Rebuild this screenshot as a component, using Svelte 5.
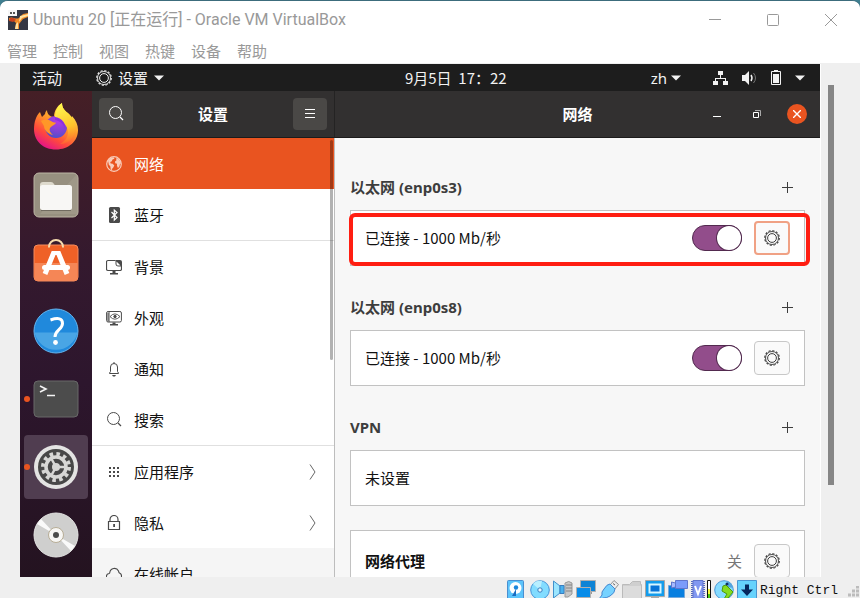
<script lang="ts">
  type Item = { id: string; label: string; icon: string; line?: boolean; more?: boolean };

  const menus = ['管理', '控制', '视图', '热键', '设备', '帮助'];

  const items: Item[] = [
    { id: 'network', label: '网络', icon: 'globe' },
    { id: 'bluetooth', label: '蓝牙', icon: 'bluetooth', line: true },
    { id: 'background', label: '背景', icon: 'background' },
    { id: 'appearance', label: '外观', icon: 'appearance' },
    { id: 'notifications', label: '通知', icon: 'bell' },
    { id: 'search', label: '搜索', icon: 'search', line: true },
    { id: 'apps', label: '应用程序', icon: 'grid', more: true },
    { id: 'privacy', label: '隐私', icon: 'lock', more: true },
    { id: 'accounts', label: '在线帐户', icon: 'cloud' },
  ];

  const dock = [
    { id: 'firefox', name: 'Firefox' },
    { id: 'files', name: '文件' },
    { id: 'software', name: 'Ubuntu Software' },
    { id: 'help', name: '帮助' },
    { id: 'terminal', name: '终端', running: true },
    { id: 'settings', name: '设置', running: true },
    { id: 'disc', name: '光盘' },
  ];

  const devices = ['disk', 'optical', 'audio', 'network', 'usb', 'folder', 'display', 'recording', 'cpu', 'mouse', 'keyboard'];

  let current = $state('network');
  let adapters = $state([
    { name: 'enp0s3', on: true, marked: true },
    { name: 'enp0s8', on: true, marked: false },
  ]);
</script>

{#snippet gear()}
  <svg width="16" height="16" viewBox="0 0 16 16" fill="none" stroke="currentColor" aria-hidden="true">
    <circle cx="8" cy="8" r="7.3" stroke-width="1.1" stroke-dasharray="2.2 1.622" />
    <circle cx="8" cy="8" r="6.5" stroke-width=".9" />
    <circle cx="8" cy="8" r="4.4" stroke-width="1" />
  </svg>
{/snippet}

{#snippet caret()}
  <svg width="10" height="6" viewBox="0 0 10 6" aria-hidden="true"><path d="M0 .5h10L5 5.5z" fill="currentColor" /></svg>
{/snippet}

{#snippet plus()}
  <svg width="11" height="11" viewBox="0 0 11 11" aria-hidden="true"><path d="M5.5 0v11M0 5.5h11" stroke="currentColor" /></svg>
{/snippet}

{#snippet panelIcon(name: string)}
  <svg class="icon" width="16" height="16" viewBox="0 0 16 16" fill="none" stroke="currentColor" aria-hidden="true">
    {#if name === 'globe'}
      <circle cx="8" cy="8" r="7.3" stroke-width="1.2" />
      <path d="M2 4.5 4.5 2l3-.7 1 1.4-2 .9-.7 1.6-1.6.8.5 1.4 2 .4 1.6 1.6-1 2.1-1 .9-.4 2-1.2-1.4-.4-2.8-1.5-1.4zM10 2.2l2 .3 2.5 3 .4 2-.9.5-.7 2.8-1.4 1.2-1-2.4.2-1.8-1.9-.6L9 5.4l1.5-1.1z" fill="currentColor" stroke="none" />
    {:else if name === 'bluetooth'}
      <rect x="3" width="11" height="16" rx="1.5" fill="currentColor" stroke="none" />
      <path d="m5.5 5 5.5 5.5-2.7 2.6V3L11 5.5 5.5 11" stroke="#fff" stroke-width="1.2" />
    {:else if name === 'background'}
      <path d="M9.5 1.5H2A1.5 1.5 0 0 0 .5 3v7A1.5 1.5 0 0 0 2 11.5h12a1.5 1.5 0 0 0 1.5-1.5V7" stroke-width="1.2" />
      <path d="M9.5 1H14a2 2 0 0 1 2 2v4.500h-3.500a3 3 0 0 1-3-3z" fill="currentColor" stroke="none" />
      <path d="m10.500 2.500 4 4H12a1.500 1.500 0 0 1-1.500-1.500z" fill="#fff" stroke="none" />
      <path d="M6.500 12h3v2H12v1.500H4V14h2.500z" fill="currentColor" stroke="none" />
    {:else if name === 'appearance'}
      <rect x=".6" y="1.500" width="14.800" height="10.500" rx="1.500" />
      <path d="M3 2v10M1 4h2M1 6h2M1 8h2M1 10h2" />
      <path d="M4 6.600q4.800-5.400 10 0-5.200 5.200-10 0z" stroke-width=".9" />
      <circle cx="9" cy="6.500" r="1.200" fill="currentColor" />
      <path d="M6.500 12.500h3V14H12v1.500H4V14h2.500z" fill="currentColor" stroke="none" />
    {:else if name === 'bell'}
      <path d="M3.500 12.500V12l1-1.500V6a3.500 3.500 0 0 1 7 0v4.500l1 1.500v.5zM8 1v1.500" />
      <path d="M6 14h4l-1 1.500H7z" fill="currentColor" stroke="none" />
    {:else if name === 'search'}
      <circle cx="7.500" cy="6.500" r="6" />
      <path d="m12 11 3 3" stroke-width="1.300" />
    {:else if name === 'grid'}
      <path d="M3 4h10M3 8h10M3 12h10" stroke-width="2" stroke-dasharray="2 2" />
    {:else if name === 'lock'}
      <path d="M2.500 6.500h11v8h-11zM4 6.500V4.500a4 4 0 0 1 8 0v2" stroke-width="1.200" />
      <path d="M7.200 9h1.800v3H7.200z" fill="currentColor" stroke="none" />
    {:else if name === 'cloud'}
      <path d="M4 13.500a3 3 0 0 1-1-6 1 1 0 0 0 .8-1A4.600 4.600 0 0 1 12.500 5c.4.900.1 1.600 1 2a3.400 3.400 0 0 1-1.500 6.500z" stroke-width="1.100" />
    {/if}
  </svg>
{/snippet}

{#snippet dockIcon(name: string)}
  <svg width="48" height="48" viewBox="0 0 48 48" aria-hidden="true">
    {#if name === 'firefox'}
      <defs>
        <linearGradient id="fx-body" x1=".8" y1=".1" x2=".3" y2="1">
          <stop offset="0" stop-color="#fff04a" />
          <stop offset=".4" stop-color="#ff9a2a" />
          <stop offset=".72" stop-color="#ff4a3c" />
          <stop offset="1" stop-color="#e3128a" />
        </linearGradient>
        <radialGradient id="fx-globe" cx=".6" cy=".2" r=".9">
          <stop offset="0" stop-color="#b737e8" />
          <stop offset=".6" stop-color="#7b45d2" />
          <stop offset="1" stop-color="#4352c8" />
        </radialGradient>
        <linearGradient id="fx-tail" x1=".5" y1="0" x2=".7" y2="1">
          <stop offset="0" stop-color="#fff64e" />
          <stop offset=".6" stop-color="#ffc32b" />
          <stop offset="1" stop-color="#ff8126" stop-opacity=".2" />
        </linearGradient>
      </defs>
      <path d="M8 9q1 3 2 5l3-3q0-2 2-4c0 4 3 7 7 7 0-6 3-11 8-14 0 5 3 8 7 11l3 5 0-3c4 4 6 9 6 14C46 38 37 46.500 24 46.500S2 38 2 26C2 19 4 13 8 9z" fill="url(#fx-body)" />
      <circle cx="24" cy="24" r="11" fill="url(#fx-globe)" />
      <path d="M30 0c0 5 3 8 7 11 7 6 8 17 3 24-3 4-7 6-12 6 8-4 10-12 6-18-2-4-8-6-11-9 0-6 3-11 7-14z" fill="url(#fx-tail)" />
      <path d="M9 18c4-2 8-1 10 0 2 2 5 1 5 2-1 2-5 3-6 5-1 2 0 5 3 7-5-1-9-5-9-9-1-2-2-3-3-5z" fill="#ff9728" />
      <path d="M23 14c7 1 11 6 10 12-1-5-5-8-10-9z" fill="#8e2fe0" />
    {:else if name === 'files'}
      <rect x="2" y="2" width="44" height="44" rx="5" fill="#979080" stroke="#bcb5a4" />
      <path d="M45 3v40H8z" fill="#a8a090" opacity=".5" />
      <path d="M8 14a3 3 0 0 1 3-3h8q2 0 3 2l2 3H8z" fill="#dedacd" />
      <rect x="8" y="14" width="32" height="25" rx="2.500" fill="#f8f7f5" />
      <path d="M9 39.500h30" stroke="#716b60" />
    {:else if name === 'software'}
      <rect x="2" y="6" width="44" height="36" rx="4" fill="#ef6127" stroke="#f58b5c" />
      <path d="M2.500 24h43v14a4 4 0 0 1-4 4h-35a4 4 0 0 1-4-4z" fill="#f58656" />
      <path d="M17 8.500V8a7 7 0 0 1 14 0v.5" fill="none" stroke="#f6dcae" stroke-width="2" />
      <path d="m22 13-9 22M26 13l9 22" stroke="#fff" stroke-width="5" />
      <rect x="20" y="12" width="8" height="4" fill="#fff" />
      <rect x="10" y="26" width="28" height="5" rx="2.500" fill="#fff" />
    {:else if name === 'help'}
      <circle cx="24" cy="24" r="22" fill="#2089dc" stroke="#63b5ef" />
      <path d="M2.500 25.500h43A22 22 0 0 1 2.500 25.500z" fill="#49a5e5" />
      <path d="M18.500 13q12-4 12 3.500c0 6-7.500 6.500-7.500 13.500" fill="none" stroke="#fff" stroke-width="3" />
      <circle cx="23.500" cy="35.500" r="2.400" fill="#fff" />
    {:else if name === 'terminal'}
      <rect x="2" y="6" width="44" height="36" rx="4" fill="#4c4c4c" stroke="#686868" />
      <path d="m8 11 6 3-6 3M15 20.500h8" fill="none" stroke="#f4f4f4" stroke-width="1.600" />
    {:else if name === 'settings'}
      <circle cx="24" cy="24" r="22" fill="#e4e4e3" />
      <circle cx="24" cy="24" r="18" fill="#484848" />
      <circle cx="24" cy="24" r="13" fill="none" stroke="#d7d7d5" stroke-width="4" stroke-dasharray="3.500 3.307" />
      <circle cx="24" cy="24" r="10" fill="none" stroke="#d7d7d5" stroke-width="3.500" />
      <circle cx="24" cy="24" r="4" fill="#d7d7d5" />
      <path d="M24 24h10M24 24l-5-9M24 24l-5 9" stroke="#d7d7d5" stroke-width="2.500" />
    {:else}
      <circle cx="24" cy="24" r="22" fill="#cfcfce" stroke="#e4e4e3" />
      <path d="M24 24 5 13 9 8zM24 24l19 11-4 5z" fill="#fafafa" />
      <circle cx="24" cy="24" r="7.500" fill="#f7f6f4" stroke="#b7ad96" />
      <circle cx="24" cy="24" r="3" fill="#4b4b4b" />
    {/if}
  </svg>
{/snippet}

{#snippet deviceIcon(name: string)}
  <svg width="20" height="20" viewBox="0 0 20 20" aria-hidden="true">
    {#if name === 'disk'}
      <rect x=".5" y=".5" width="16" height="19" rx="1" fill="#5cc4fb" stroke="#4b8fd0" />
      <circle cx="8.500" cy="8" r="6" fill="#fff" />
      <circle cx="9" cy="7.500" r="2.200" fill="#1c86dc" />
      <path d="m9 9-4 7h4z" fill="#1a6dc2" />
    {:else if name === 'optical'}
      <circle cx="10" cy="10" r="9.300" fill="#82dcff" stroke="#4694d8" />
      <path d="M10 10 3 4a9 9 0 0 1 9-3z" fill="#b8efff" />
      <circle cx="10" cy="10" r="2.200" fill="#e8faff" stroke="#397ec0" />
    {:else if name === 'audio'}
      <path d="M12 3q4-3 7 0v11l-4 3h-3z" fill="#c7c7c7" stroke="#999" />
      <path d="M13 5h6M13 8h6M13 11h6" stroke="#858585" />
      <path d="M.5 1 7 6v7L.5 18z" fill="#9be6ff" stroke="#4291cc" />
      <path d="M7 5.500h4v8H7z" fill="#47b1ef" stroke="#397ec0" />
    {:else if name === 'network'}
      <path d="M4.500.500h15v11h-15z" fill="#0d83d5" stroke="#b0b0b0" />
      <path d="M10 12h6v2h-6z" fill="#999" />
      <path d="M.5 7.500h14v10H.5z" fill="#088ce9" stroke="#b0b0b0" />
      <path d="M4 18h8v2H4z" fill="#888" />
    {:else if name === 'usb'}
      <path d="m11 5 4-4.500 4.500 4-4 5z" fill="#ececec" stroke="#929292" />
      <path d="M5 9q3-5 6-5l5 5q0 4-5 7-3 2-7 2l-3 2-1-1 3-4q-1-3 2-6z" fill="#76d2ff" stroke="#4688d0" />
      <path d="M14 3.500 16 5" stroke="#666" />
    {:else if name === 'folder'}
      <path d="M.5 4.500h7l3-3h8v3h1V20H.5z" fill="#cfcfcf" stroke="#bbb" />
      <path d="M1 6h18v13H1z" fill="#dcdcdc" />
    {:else if name === 'display'}
      <path d="M.5.500h19v16H.5z" fill="#139cec" stroke="#a8a8a8" />
      <path d="M4.500 4.500h11v8h-11z" fill="#0873d6" stroke="#d8f6ff" stroke-width="2" />
      <path d="M6 17h8v3H6z" fill="#aaa" />
    {:else if name === 'recording'}
      <path d="M.5 5.500h16v12H.5z" fill="#087fe0" stroke="#76a9da" />
      <path d="M7.500.500h12v8h-12z" fill="#7b9bfa" stroke="#6075cc" />
      <path d="m3.500 2 4 1v4l-4 1z" fill="#a5b9ff" stroke="#6075cc" />
      <path d="M4 18h9v2H4z" fill="#aaa" />
    {:else if name === 'cpu'}
      <path d="M1 1v19M13 1v19" stroke="#5669bd" stroke-width="2" stroke-dasharray="1 1" />
      <path d="M2 .5h10V20H2z" fill="#8197f0" stroke="#6075cc" />
      <path d="m4 6 3 8 3-8" fill="none" stroke="#fff" stroke-width="2" />
      <path d="M16.500.500h3V20h-3z" fill="#fafa40" stroke="#111" />
      <path d="M17 1h2v8h-2z" fill="#fff" />
      <path d="M17 14h2v6h-2z" fill="#4acb16" />
    {:else if name === 'mouse'}
      <circle cx="10" cy="10" r="9.300" fill="#85dbff" stroke="#4a98d8" />
      <path d="M13 1q5 1 6 7l-5-1z" fill="#54a4de" />
      <path d="m9 6 3-1 7 7-5 6-4 1 3-5-5-3z" fill="#83dd20" stroke="#4e9a0d" />
      <circle cx="13" cy="4" r="1.500" fill="#0d3166" />
    {:else}
      <path d="M.5.500h19V20H.5z" fill="#66d2fc" stroke="#4b96d2" />
      <path d="M8 4.500h4v5h4L10 16 4 9.500h4z" fill="#06275d" />
    {/if}
  </svg>
{/snippet}

<div class="window">
  <header class="titlebar">
    <svg class="logo" width="20" height="20" viewBox="0 0 20 20" aria-hidden="true">
      <rect width="20" height="20" fill="#343642" />
      <path d="M1 8c4-2 6 2 10 0l4-4 5-1v4l-5 2-4 5v5H7l1-6-3-3-4 1z" fill="#f28c28" />
      <path d="m12 6 8-2v2l-6 2-3 4zM8 14l2-2v7H7z" fill="#ffe2a0" />
      <path d="M2 8q4-1 6 2l-3 2-4-1z" fill="#c8421e" />
      <path d="M0 0h9v6H0z" fill="#f6f6f6" />
      <path d="M2 2h2v2H2zM5 2h2v2H5z" fill="#555" />
    </svg>
    <h1>Ubuntu 20 [正在运行] - Oracle VM VirtualBox</h1>
    <div class="controls">
      <button aria-label="最小化">
        <svg width="12" height="12" viewBox="0 0 12 12"><path d="M0 5.500h12" stroke="currentColor" /></svg>
      </button>
      <button aria-label="最大化">
        <svg width="12" height="12" viewBox="0 0 12 12"><rect x=".5" y=".5" width="11" height="11" rx="1" fill="none" stroke="currentColor" /></svg>
      </button>
      <button aria-label="关闭">
        <svg width="12" height="12" viewBox="0 0 12 12"><path d="m0 0 12 12M12 0 0 12" stroke="currentColor" /></svg>
      </button>
    </div>
  </header>

  <nav class="menubar">
    {#each menus as m (m)}
      <button>{m}</button>
    {/each}
  </nav>

  <div class="viewport">
    <div class="guest">
      <div class="topbar">
        <div class="left">
          <button>活动</button>
          <button class="app">{@render gear()}<span>设置</span>{@render caret()}</button>
        </div>
        <time>9月5日&nbsp; 17：22</time>
        <div class="right">
          <button class="lang">zh {@render caret()}</button>
          <button class="tray" aria-label="系统菜单">
            <svg width="15" height="14" viewBox="0 0 15 14"><path d="M5 0h5v4H8v3h5v3h2v4h-5v-4h2V8H3v2h2v4H0v-4h2V7h5V4H5z" fill="currentColor" /></svg>
            <svg width="15" height="14" viewBox="0 0 15 14"><path d="M0 4h3l4-4v14L3 10H0z" fill="currentColor" /><path d="M9 4q2 3 0 6" fill="none" stroke="currentColor" stroke-width="1.500" /><path d="M11.500 2q4 5 0 10" fill="none" stroke="#777" /></svg>
            <svg width="10" height="15" viewBox="0 0 10 15"><path d="M.5 1.500h9v13h-9z" fill="none" stroke="currentColor" /><path d="M3 0h4v2H3zM2 4h6v9H2z" fill="currentColor" /></svg>
            {@render caret()}
          </button>
        </div>
      </div>

      <div class="desktop">
        <nav class="dock" aria-label="Dock">
          {#each dock as d (d.id)}
            <button class:focused={d.id === 'settings'} class:running={d.running} aria-label={d.name}>
              {@render dockIcon(d.id)}
            </button>
          {/each}
        </nav>

        <aside class="sidebar">
          <div class="headerbar">
            <button class="tool" aria-label="搜索">{@render panelIcon('search')}</button>
            <h2>设置</h2>
            <button class="tool" aria-label="菜单">
              <svg width="10" height="10" viewBox="0 0 10 10"><path d="M0 .5h10M0 4.500h10M0 8.500h10" stroke="currentColor" /></svg>
            </button>
          </div>
          <div class="list">
            <ul>
              {#each items as item (item.id)}
                <li class:line={item.line}>
                  <button
                    class:selected={current === item.id}
                    class:hovered={item.id === 'accounts'}
                    onclick={() => (current = item.id)}
                  >
                    {@render panelIcon(item.icon)}
                    <span>{item.label}</span>
                    {#if item.more}
                      <svg width="7" height="16" viewBox="0 0 7 16" aria-hidden="true"><path d="m1 .5 5 7.500-5 7.500" fill="none" stroke="#666" /></svg>
                    {/if}
                  </button>
                </li>
              {/each}
            </ul>
            <div class="scroll"></div>
          </div>
        </aside>

        <main>
          <div class="headerbar">
            <span></span>
            <h2>网络</h2>
            <div class="wm">
              <button aria-label="最小化"><svg width="8" height="10" viewBox="0 0 8 10"><path d="M0 7.500h8" stroke="currentColor" /></svg></button>
              <button aria-label="还原"><svg width="8" height="8" viewBox="0 0 8 8" fill="none"><path d="M2 .5h5.500V6" stroke="#aaa" /><path d="M.5 2.500h5v5h-5z" stroke="currentColor" /></svg></button>
              <button class="close" aria-label="关闭"><svg width="8" height="8" viewBox="0 0 8 8"><path d="m0 0 8 8M8 0 0 8" stroke="currentColor" stroke-width="1.400" /></svg></button>
            </div>
          </div>

          <div class="content">
            {#each adapters as a (a.name)}
              <section>
                <div class="head">
                  <h3>以太网 ({a.name})</h3>
                  <button aria-label="添加">{@render plus()}</button>
                </div>
                <div class="card">
                  <label for={a.name}>已连接 - 1000 Mb/秒</label>
                  <input id={a.name} type="checkbox" role="switch" bind:checked={a.on} />
                  <button class="options" class:active={a.marked} aria-label="选项">{@render gear()}</button>
                  {#if a.marked}<div class="mark"></div>{/if}
                </div>
              </section>
            {/each}
            <section>
              <div class="head">
                <h3>VPN</h3>
                <button aria-label="添加">{@render plus()}</button>
              </div>
              <div class="card"><p>未设置</p></div>
            </section>
            <section>
              <div class="card proxy">
                <h4>网络代理</h4>
                <span class="state">关</span>
                <button class="options" aria-label="代理选项">{@render gear()}</button>
              </div>
            </section>
          </div>
        </main>
      </div>
    </div>
    <div class="gutter"><div class="thumb"></div></div>
  </div>

  <footer class="statusbar">
    <div class="devices">
      {#each devices as d (d)}
        {@render deviceIcon(d)}
      {/each}
    </div>
    <span class="hostkey">Right Ctrl</span>
    <svg class="grip" width="12" height="12" viewBox="0 0 12 12" aria-hidden="true">
      <path d="M8 1h3M4 5h3M8 5h3M0 9h3M4 9h3M8 9h3" stroke="#bcbcbc" stroke-width="3" />
    </svg>
  </footer>
</div>

<style>
  :global(body) {
    margin: 0;
    background: #3f7f90;
  }
  .window {
    height: 100vh;
    box-sizing: border-box;
    display: flex;
    flex-direction: column;
    overflow: hidden;
    border-top: 1px solid #3c6c7c;
    border-radius: 8px 8px 0 0;
    background: #efefef;
    font-family: "Noto Sans", "Noto Sans CJK SC", sans-serif;
    font-size: 15px;
    line-height: 22px;
    color: #111;
  }
  button {
    display: flex;
    align-items: center;
    justify-content: center;
    margin: 0;
    padding: 0;
    border: 0;
    background: none;
    color: inherit;
    font: inherit;
  }
  h1, h2, h3, h4, p, ul {
    margin: 0;
    padding: 0;
  }
  svg {
    display: block;
    flex: none;
  }

  .titlebar {
    flex: none;
    display: flex;
    align-items: center;
    height: 37px;
    padding-left: 8px;
    background: #fff;
    color: #999;
  }
  h1 {
    flex: 1;
    margin-left: 5px;
    font-family: Roboto, "Noto Sans CJK SC", sans-serif;
    font-size: 16px;
    font-weight: 400;
    white-space: nowrap;
  }
  .controls {
    display: flex;
  }
  .controls button {
    width: 58px;
    height: 37px;
  }
  .menubar {
    flex: none;
    display: flex;
    gap: 16px;
    height: 25px;
    padding: 0 7px;
    margin-bottom: 1px;
    background: #fff;
    color: #999;
  }

  .viewport {
    flex: 1;
    min-height: 0;
    display: flex;
    padding-left: 20px;
  }
  .guest {
    flex: 1;
    min-width: 0;
    display: flex;
    flex-direction: column;
    overflow: hidden;
    border-right: 1px solid #fff;
  }
  .gutter {
    width: 39px;
  }
  .thumb {
    width: 6px;
    height: 78%;
    margin: 21px 0 0 7px;
    background: #868686;
  }

  .topbar {
    flex: none;
    display: grid;
    grid-template-columns: 5fr auto 4fr;
    align-items: center;
    height: 27px;
    padding: 0 15px 0 12px;
    background: #1d1d1d;
    color: #f2f2f2;
  }
  time, label {
    font-family: "Noto Sans CJK SC", sans-serif;
  }
  .left, .right, .tray {
    display: flex;
    align-items: center;
  }
  .left {
    gap: 34px;
  }
  .app {
    gap: 6px;
  }
  .right {
    justify-content: flex-end;
    gap: 32px;
  }
  .lang {
    gap: 4px;
  }
  .tray {
    gap: 14px;
  }

  .desktop {
    flex: 1;
    min-height: 0;
    display: flex;
  }
  .dock {
    flex: none;
    display: flex;
    flex-direction: column;
    gap: 4px;
    padding: 4px;
    background: linear-gradient(#451f26, #34192e 35%, #2d162d 60%, #241320);
  }
  .dock button {
    position: relative;
    flex: none;
    width: 64px;
    height: 64px;
    border-radius: 4px;
  }
  .dock .focused {
    background: #503d50;
  }
  .running::before {
    content: '';
    position: absolute;
    left: 0;
    width: 6px;
    height: 6px;
    border-radius: 50%;
    background: #e95420;
  }

  .sidebar {
    flex: none;
    width: 242px;
    display: flex;
    flex-direction: column;
    border-right: 1px solid #bdbdbd;
    background: #fff;
  }
  .headerbar {
    flex: none;
    display: grid;
    grid-template-columns: 1fr auto 1fr;
    align-items: center;
    height: 46px;
    padding: 0 7px;
    border-bottom: 1px solid #1c1b1b;
    background: #323030;
    color: #fff;
  }
  .sidebar .headerbar {
    margin-right: -1px;
    border-right: 1px solid #242323;
  }
  h2 {
    font-size: 15px;
    font-weight: 700;
  }
  .tool {
    width: 34px;
    height: 32px;
    border-radius: 4px;
    background: #4a4846;
  }
  .tool:last-child {
    justify-self: end;
  }
  .list {
    position: relative;
    flex: 1;
    min-height: 0;
    overflow: hidden;
  }
  ul {
    list-style: none;
  }
  .line {
    border-bottom: 1px solid #e0e0e0;
  }
  li button {
    width: 100%;
    height: 51px;
    gap: 12px;
    padding: 0 18px 0 14px;
    text-align: left;
  }
  li .icon {
    color: #4a4a4a;
  }
  li span {
    flex: 1;
  }
  .selected {
    background: #e95420;
    color: #fff;
  }
  .selected .icon {
    color: #f9cdbb;
  }
  .hovered {
    background: #f5f5f5;
  }
  .scroll {
    position: absolute;
    top: 2px;
    right: 1px;
    width: 3px;
    height: 50%;
    border-radius: 2px;
    background: rgb(0 0 0 / 30%);
  }

  main {
    flex: 1;
    min-width: 0;
    display: flex;
    flex-direction: column;
    background: #f7f7f7;
  }
  .wm {
    display: flex;
    justify-self: end;
    gap: 20px;
    padding-right: 6px;
  }
  .wm button {
    width: 20px;
    height: 20px;
    border-radius: 50%;
  }
  .wm .close {
    background: #e95420;
  }
  .content {
    flex: 1;
    min-height: 0;
    display: flex;
    flex-direction: column;
    gap: 24px;
    padding: 32px 15px 0;
    overflow: hidden;
  }
  section {
    flex: none;
  }
  .head {
    display: flex;
    align-items: center;
    justify-content: space-between;
    height: 34px;
    margin-bottom: 6px;
    color: #3d3d3d;
  }
  .head button {
    width: 36px;
    height: 34px;
  }
  h3 {
    font-size: 15px;
    font-weight: 700;
  }
  .card {
    position: relative;
    display: flex;
    align-items: center;
    gap: 12px;
    min-height: 54px;
    padding: 0 14px;
    border: 1px solid #c2c2c2;
    background: #fff;
  }
  label, h4 {
    flex: 1;
  }
  h4 {
    font-size: 15px;
    font-weight: 700;
  }
  .proxy {
    min-height: 60px;
  }
  .state {
    color: #777;
  }
  input {
    appearance: none;
    display: flex;
    box-sizing: border-box;
    width: 50px;
    height: 26px;
    margin: 0;
    border: 1px solid #522a4f;
    border-radius: 13px;
    background: #ccc;
  }
  input::before {
    content: '';
    width: 24px;
    height: 24px;
    border-radius: 50%;
    background: #fff;
    box-shadow: 0 0 0 1px #522a4f;
  }
  input:checked {
    justify-content: flex-end;
    background: #924d8b;
  }
  .options {
    box-sizing: border-box;
    width: 36px;
    height: 34px;
    border: 1px solid #c8c8c8;
    border-radius: 4px;
    background: #fafafa;
    color: #3d3d3d;
  }
  .active {
    border: 2px solid #f0a184;
  }
  .mark {
    position: absolute;
    inset: 2px -6px -1px -2px;
    border: 4px solid #ff1e12;
    border-radius: 6px;
    pointer-events: none;
  }

  .statusbar {
    flex: none;
    display: flex;
    justify-content: flex-end;
    height: 18px;
    padding-top: 3px;
    overflow: hidden;
  }
  .devices {
    display: flex;
    gap: 3px;
  }
  .hostkey {
    margin: 0 10px 0 3px;
    font-family: "Liberation Mono", monospace;
    font-size: 13px;
    line-height: 22px;
  }
  .grip {
    align-self: flex-end;
  }
</style>
